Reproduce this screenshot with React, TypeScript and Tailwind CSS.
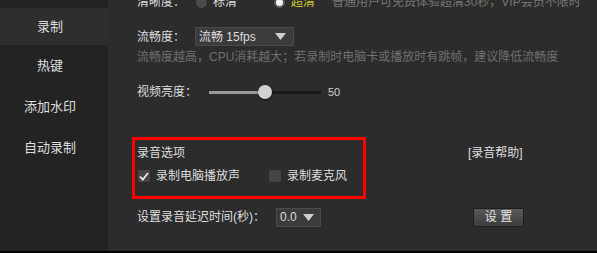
import React from "react";

const font = { fontFamily: '"Liberation Sans", "Noto Sans CJK SC", sans-serif' };

const menu = ["录制", "热键", "添加水印", "自动录制"];

function Arrow() {
  return (
    <svg width="11" height="7" viewBox="0 0 11 7">
      <path d="M0 0 H11 L5.5 7 Z" fill="#cfcfcf" />
    </svg>
  );
}

function Radio({ on }: { on?: boolean }) {
  return (
    <span
      className={
        "flex h-[13px] w-[13px] items-center justify-center rounded-full border border-[#262626] " +
        (on ? "bg-[#5a5a5a]" : "bg-[#4a4a4a]")
      }
    >
      {on && <span className="h-[7px] w-[7px] rounded-full bg-[#f2f2f2]" />}
    </span>
  );
}

function Check({ on }: { on?: boolean }) {
  return (
    <span className="flex h-[14px] w-[14px] items-center justify-center rounded-[2px] border border-[#2a2a2a] bg-[#454545]">
      {on && (
        <svg width="10" height="9" viewBox="0 0 10 9">
          <path d="M1 4.5 L3.8 7.5 L9 1" stroke="#f3e6e6" strokeWidth="1.8" fill="none" />
        </svg>
      )}
    </span>
  );
}

export default function App() {
  return (
    <div
      className="flex h-[253px] w-[597px] overflow-hidden border-b-2 border-black bg-[#2c2c2c] text-[12px] text-[#dedede]"
      style={font}
    >
      {/* 左侧菜单 */}
      <div className="flex w-[108px] shrink-0 flex-col bg-[#232323] pt-[8px] text-[13px]">
        {menu.map((m, i) => (
          <div
            key={m}
            className={
              "flex items-center justify-center pr-[8px] " +
              (i === 0 ? "h-[37px] bg-[#2e2e2e]" : "h-[41px]")
            }
          >
            {m}
          </div>
        ))}
      </div>

      {/* 设置内容 */}
      <div className="flex flex-1 flex-col pl-[29px]">
        <div className="-mt-[8px] flex h-[20px] items-center">
          <span className="w-[58px]">清晰度：</span>
          <Radio />
          <span className="ml-[5px] w-[60px]">标清</span>
          <Radio on />
          <span className="ml-[5px] text-[#cccc2a]">超清</span>
          <span className="ml-[17px] text-[#777]">普通用户可免费体验超清30秒，VIP会员不限时</span>
        </div>

        <div className="mt-[15px] flex h-[19px] items-center">
          <span className="w-[58px]">流畅度：</span>
          <div className="flex h-[19px] w-[99px] items-center justify-between border border-[#4a4a4a] bg-[#3b3b3b] pl-[3px] pr-[7px]">
            <span>流畅 15fps</span>
            <Arrow />
          </div>
        </div>

        <div className="mt-[4px] flex h-[14px] items-center text-[#6f6f6f]">
          流畅度越高，CPU消耗越大；若录制时电脑卡或播放时有跳帧，建议降低流畅度
        </div>

        <div className="mt-[20px] flex h-[16px] items-center">
          <span className="w-[72px]">视频亮度：</span>
          <div className="relative flex h-[16px] w-[112px] items-center">
            <div className="h-[3px] w-[55px] bg-[#9a9a9a]" />
            <div className="h-[3px] flex-1 bg-[#1a1a1a]" />
            <span className="absolute left-[49px] top-[1px] h-[14px] w-[14px] rounded-full bg-[#d0d0d0] shadow-[0_1px_2px_rgba(0,0,0,0.7)]" />
          </div>
          <span className="ml-[7px] text-[11px] text-[#cfcfcf]">50</span>
        </div>

        <div className="ml-[-5px] mt-[37px] flex items-start">
          <div className="flex h-[62px] w-[234px] flex-col border-[3px] border-[#ff0000] pl-[2px] pt-[6px]">
            <div className="flex h-[14px] items-center">录音选项</div>
            <div className="mt-[9px] flex h-[14px] items-center">
              <Check on />
              <span className="ml-[5px] w-[112px]">录制电脑播放声</span>
              <Check />
              <span className="ml-[5px]">录制麦克风</span>
            </div>
          </div>
          <span className="ml-[102px] mt-[9px] flex h-[14px] items-center">[录音帮助]</span>
        </div>

        <div className="mt-[8px] flex h-[20px] items-center">
          <span className="w-[139px]">设置录音延迟时间(秒)：</span>
          <div className="flex h-[19px] w-[45px] items-center justify-between border border-[#4a4a4a] bg-[#3b3b3b] pl-[3px] pr-[6px]">
            <span>0.0</span>
            <Arrow />
          </div>
          <button className="ml-[152px] flex h-[19px] w-[51px] items-center justify-center border border-[#1e1e1e] bg-gradient-to-b from-[#5a5a5a] to-[#3c3c3c] text-[12px] text-[#e8e8e8]">
            设&nbsp;置
          </button>
        </div>
      </div>
    </div>
  );
}
